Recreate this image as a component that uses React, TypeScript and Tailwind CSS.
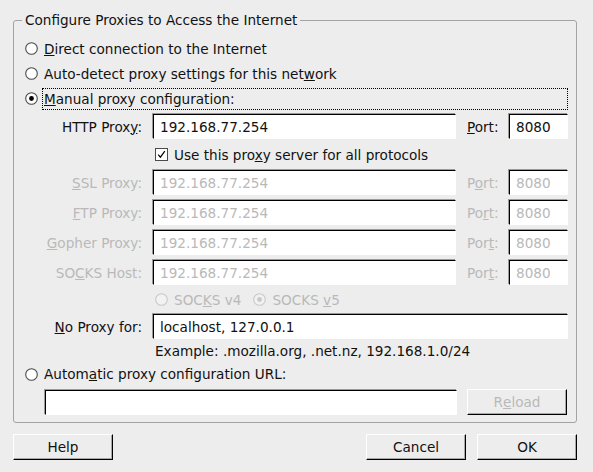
import React from "react";

const FONT = { fontFamily: '"DejaVu Sans", "Liberation Sans", sans-serif' };

function Radio({ checked = false, disabled = false }: { checked?: boolean; disabled?: boolean }) {
  const stroke = disabled ? "#c8c8c8" : "#4a4a4a";
  const dot = disabled ? "#c8c8c8" : "#000";
  return (
    <svg width="13" height="13" viewBox="0 0 13 13" className="shrink-0">
      <circle cx="6.5" cy="6.5" r="5.8" fill={disabled ? "#f2f2f2" : "#fff"} stroke={stroke} strokeWidth="1.1" />
      {checked && <circle cx="6.5" cy="6.5" r="2.4" fill={dot} />}
    </svg>
  );
}

function CheckBox() {
  return (
    <svg width="13" height="13" viewBox="0 0 13 13" className="shrink-0">
      <rect x="0.5" y="0.5" width="12" height="12" fill="#fff" stroke="#4a4a4a" />
      <path d="M3.2 6.6 L5.4 9.2 L9.8 3.2" fill="none" stroke="#000" strokeWidth="1.2" />
    </svg>
  );
}

const inputCls =
  "h-[25px] bg-white border border-t-black border-l-black border-r-white border-b-white shadow-[-1px_-1px_0_#9a9a9a] px-[6px] flex items-center whitespace-nowrap overflow-hidden";

const buttonCls =
  "h-[26px] w-[100px] flex items-center justify-center border border-t-white border-l-white border-r-black border-b-black shadow-[inset_-1px_-1px_0_#a8a8a8] bg-[#ededed]";

function ProxyRow({
  label,
  value,
  port,
  disabled,
}: {
  label: React.ReactNode;
  value: string;
  port: React.ReactNode;
  disabled?: boolean;
}) {
  const txt = disabled ? "text-[#b9b9b9]" : "text-[#111]";
  return (
    <div className="flex items-center h-[25px]">
      <div className={`w-[118px] pr-[1px] text-right whitespace-nowrap ${txt}`}>{label}</div>
      <div className={`${inputCls} ml-[10px] w-[303px] ${txt}`}>{value}</div>
      <div className={`ml-[11px] w-[42px] ${txt}`}>{port}</div>
      <div className={`${inputCls} w-[59px] px-[5px] ${txt}`}>8080</div>
    </div>
  );
}

export default function App() {
  return (
    <div className="w-[593px] h-[472px] bg-[#ededed] text-[#111] text-[13.6px] leading-[16px]" style={FONT}>
      <div className="px-[13px] pt-[12px]">
        <fieldset className="border border-[#a3a3a3] rounded-[3px] pl-[11px] pr-[8px] pb-[7px] w-[564px]">
          <legend className="ml-[-3px] px-[3px]">Configure Proxies to Access the Internet</legend>

          <div className="mt-[8px] flex items-center h-[25px] gap-[6px]">
            <Radio />
            <span>
              <u>D</u>irect connection to the Internet
            </span>
          </div>
          <div className="flex items-center h-[25px] gap-[6px]">
            <Radio />
            <span>
              Auto-detect proxy settings for this net<u>w</u>ork
            </span>
          </div>
          <div className="flex items-center h-[25px] gap-[4px]">
            <Radio checked />
            <div className="flex-1 h-[22px] border border-dotted border-black flex items-center pl-[1px]">
              <span>
                <u>M</u>anual proxy configuration:
              </span>
            </div>
          </div>

          <div className="mt-[3px]">
            <ProxyRow
              label={
                <>
                  HTTP Prox<u>y</u>:
                </>
              }
              value="192.168.77.254"
              port={
                <>
                  <u>P</u>ort:
                </>
              }
            />
          </div>
          <div className="h-[31px] flex items-center pl-[130px] gap-[6px]">
            <CheckBox />
            <span>
              Use this pro<u>x</u>y server for all protocols
            </span>
          </div>
          <div className="flex flex-col gap-[5px]">
            <ProxyRow
              disabled
              label={
                <>
                  <u>S</u>SL Proxy:
                </>
              }
              value="192.168.77.254"
              port={
                <>
                  P<u>o</u>rt:
                </>
              }
            />
            <ProxyRow
              disabled
              label={
                <>
                  <u>F</u>TP Proxy:
                </>
              }
              value="192.168.77.254"
              port={
                <>
                  Po<u>r</u>t:
                </>
              }
            />
            <ProxyRow
              disabled
              label={
                <>
                  <u>G</u>opher Proxy:
                </>
              }
              value="192.168.77.254"
              port={
                <>
                  Por<u>t</u>:
                </>
              }
            />
            <ProxyRow
              disabled
              label={
                <>
                  SO<u>C</u>KS Host:
                </>
              }
              value="192.168.77.254"
              port={
                <>
                  Por<u>t</u>:
                </>
              }
            />
          </div>
          <div className="h-[29px] flex items-center pl-[130px] text-[#b9b9b9]">
            <Radio disabled />
            <span className="ml-[6px]">
              SOC<u>K</u>S v4
            </span>
            <span className="ml-[12px]">
              <Radio disabled checked />
            </span>
            <span className="ml-[6px]">
              SOCKS <u>v</u>5
            </span>
          </div>
          <div className="flex items-center h-[25px]">
            <div className="w-[118px] pr-[1px] text-right whitespace-nowrap">
              <u>N</u>o Proxy for:
            </div>
            <div className={`${inputCls} ml-[10px] flex-1`}>localhost, 127.0.0.1</div>
          </div>
          <div className="h-[23px] flex items-center pl-[130px] whitespace-nowrap">
            Example: .mozilla.org, .net.nz, 192.168.1.0/24
          </div>
          <div className="flex items-center h-[24px] gap-[6px]">
            <Radio />
            <span>
              Autom<u>a</u>tic proxy configuration URL:
            </span>
          </div>
          <div className="mt-[3px] flex items-center">
            <div className={`${inputCls} ml-[20px] w-[412px]`}></div>
            <div className={`${buttonCls} ml-[10px] text-[#b9b9b9]`}>
              R<u>e</u>load
            </div>
          </div>
        </fieldset>
      </div>

      <div className="px-[13px] pt-[11px] flex items-center">
        <div className={buttonCls}>Help</div>
        <div className="flex-1" />
        <div className={buttonCls}>Cancel</div>
        <div className={`${buttonCls} ml-[11px] mr-[3px]`}>OK</div>
      </div>
    </div>
  );
}
